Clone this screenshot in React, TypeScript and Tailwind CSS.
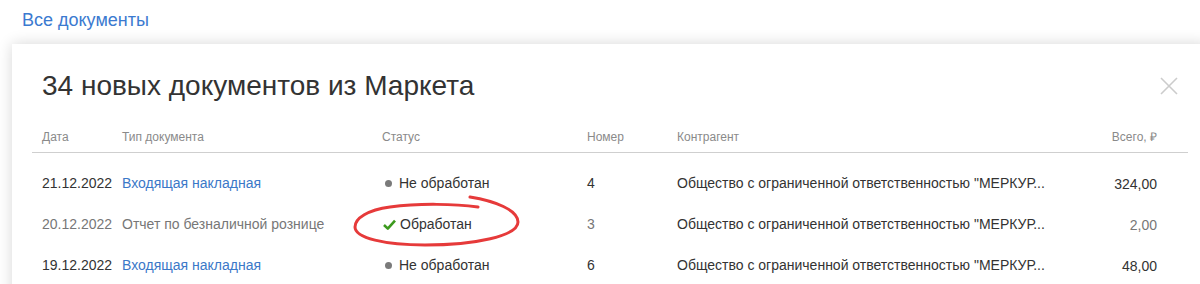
const rows = [
  { date: "21.12.2022", type: "Входящая накладная", done: false, num: "4", total: "324,00" },
  { date: "20.12.2022", type: "Отчет по безналичной рознице", done: true, num: "3", total: "2,00" },
  { date: "19.12.2022", type: "Входящая накладная", done: false, num: "6", total: "48,00" },
];

const cols = "grid grid-cols-[80px_260px_205px_90px_minmax(0,1fr)_140px]";

function Check() {
  return (
    <svg width="13" height="11" viewBox="0 0 13 11" className="mr-[4px]">
      <path d="M1 6 L4.8 9.6 L12 1.6" fill="none" stroke="#3c9a1e" strokeWidth="2.6" strokeLinejoin="round" />
    </svg>
  );
}

function Close() {
  return (
    <svg width="18" height="18" viewBox="0 0 18 18">
      <path d="M1 1 L17 17 M17 1 L1 17" stroke="#cccccc" strokeWidth="1.6" />
    </svg>
  );
}

export default function App() {
  return (
    <div className="h-[284px] w-[1200px] overflow-hidden bg-white font-['Liberation_Sans',Arial,sans-serif] text-[#333]">
      <div className="pl-[22px] pt-[9px] text-[18px] leading-[22px] text-[#3b7ad0]">Все документы</div>
      <div className="relative ml-3 mr-[-8px] mt-[13px] h-[260px] bg-white px-5 shadow-[0_0_14px_rgba(0,0,0,0.16)]">
        <div className="flex items-center justify-between pl-[10px] pr-[10px] pt-[25px]">
          <h1 className="text-[28px] leading-[34px] text-[#333]">34 новых документов из Маркета</h1>
          <Close />
        </div>
        <div className={`${cols} mt-[26px] border-b border-[#cfcfcf] pb-[7px] text-[12px] leading-[16px] text-[#8a8a8a]`}>
          <div className="pl-[10px]">Дата</div>
          <div className="pl-[10px]">Тип документа</div>
          <div className="pl-[10px]">Статус</div>
          <div className="pl-[10px]">Номер</div>
          <div className="pl-[10px]">Контрагент</div>
          <div className="pr-[31px] text-right">Всего, ₽</div>
        </div>
        <div className="pt-[10px] text-[14px]">
          {rows.map((r) => (
            <div key={r.date} className={`${cols} h-[41px] items-center ${r.done ? "text-[#777]" : "text-[#333]"}`}>
              <div className="pl-[10px]">{r.date}</div>
              <div className={`pl-[10px] ${r.done ? "" : "text-[#3b78c8]"}`}>{r.type}</div>
              <div className="flex items-center pl-[11px] text-[#333]">
                {r.done ? <Check /> : <span className="ml-[2px] mr-[7px] h-[7px] w-[7px] rounded-full bg-[#7a7a7a]" />}
                {r.done ? "Обработан" : "Не обработан"}
              </div>
              <div className="pl-[10px]">{r.num}</div>
              <div className="overflow-hidden whitespace-nowrap pl-[10px] text-[#333]">Общество с ограниченной ответственностью "МЕРКУР...</div>
              <div className="pr-[31px] pt-[2px] text-right">{r.total}</div>
            </div>
          ))}
        </div>
        <svg className="pointer-events-none absolute left-[338px] top-[150px]" width="176" height="58" viewBox="0 0 176 58">
          <path
            d="M120 3 C145 7 168 16 168 28 C168 42 125 51 75 51 C35 51 5 44 5 33 C5 24 18 16 40 13 C70 9 105 10 128 13"
            fill="none"
            stroke="#e63a3a"
            strokeWidth="3"
            strokeLinecap="round"
          />
        </svg>
      </div>
    </div>
  );
}
